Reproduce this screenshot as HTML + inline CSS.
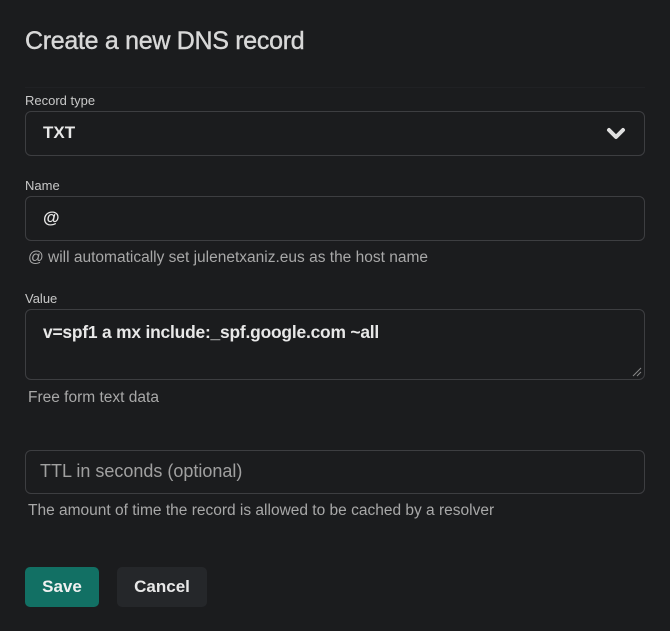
<!DOCTYPE html>
<html><head><meta charset="utf-8"><style>
html,body{margin:0;padding:0;}
body{width:670px;height:631px;background:#1b1c1e;font-family:"Liberation Sans",sans-serif;position:relative;overflow:hidden;color:#e6e6e6;}
.a{position:absolute;white-space:nowrap;}
.t{left:25px;top:27px;font-size:25px;color:#d8d8d8;letter-spacing:-0.3px;-webkit-text-stroke:0.4px #d8d8d8;}
.hr{left:25px;top:87px;width:620px;height:1px;background:#202124;}
.l{font-size:13px;color:#c8c8c8;left:25px;}
.box{left:25px;width:618px;border:1px solid #3d3e41;border-radius:6px;background:#1b1c1e;}
.v{font-size:17px;font-weight:bold;color:#e8e8e8;left:43px;}
.h{font-size:15.5px;color:#a8a8a8;left:28px;}
.btn{border-radius:5px;font-size:17px;font-weight:bold;text-align:center;line-height:40px;height:40px;}
</style></head><body>
<div class="a t">Create a new DNS record</div>
<div class="a hr"></div>
<div class="a l" style="top:93px">Record type</div>
<div class="a box" style="top:111px;height:43px"></div>
<div class="a v" style="top:123px">TXT</div>
<svg class="a" style="left:606px;top:127px" width="20" height="14" viewBox="0 0 20 14"><path d="M3 3 L10 10 L17 3" stroke="#e0e0e0" stroke-width="4" fill="none" stroke-linecap="round" stroke-linejoin="round"/></svg>
<div class="a l" style="top:178px">Name</div>
<div class="a box" style="top:196px;height:43px"></div>
<div class="a v" style="top:208px">@</div>
<div class="a h" style="top:249px">@ will automatically set julenetxaniz.eus as the host name</div>
<div class="a l" style="top:291px">Value</div>
<div class="a box" style="top:309px;height:69px"></div>
<div class="a v" style="top:322px;font-size:17.4px;letter-spacing:-0.2px">v=spf1 a mx include:_spf.google.com ~all</div>
<svg class="a" style="left:632px;top:367px" width="10" height="10"><path d="M1 9 L9 1 M5 9 L9 5" stroke="#888" stroke-width="1"/></svg>
<div class="a h" style="top:389px">Free form text data</div>
<div class="a box" style="top:450px;height:42px"></div>
<div class="a" style="left:40px;top:461px;font-size:18px;color:#a0a0a0">TTL in seconds (optional)</div>
<div class="a h" style="top:502px">The amount of time the record is allowed to be cached by a resolver</div>
<div class="a btn" style="left:25px;top:567px;width:74px;background:#127064;color:#f0f0f0">Save</div>
<div class="a btn" style="left:117px;top:567px;width:90px;background:#25272a;color:#e8e8e8">Cancel</div>
</body></html>
